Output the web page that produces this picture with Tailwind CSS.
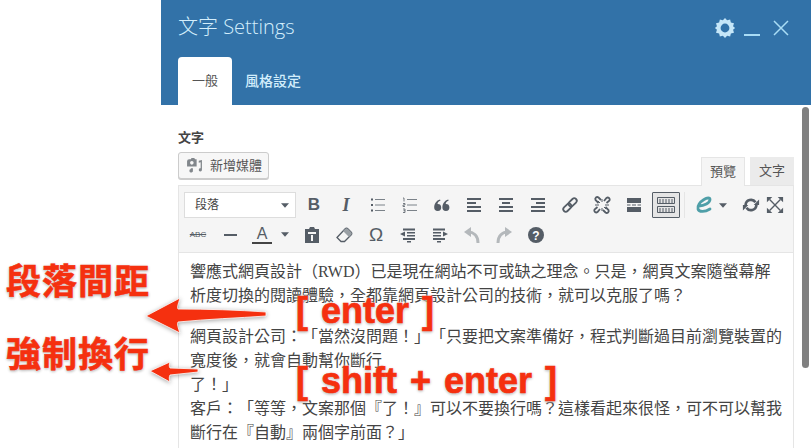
<!DOCTYPE html>
<html lang="zh-Hant">
<head>
<meta charset="UTF-8">
<title>文字 Settings</title>
<script src="https://cdn.jsdelivr.net/npm/@tailwindcss/browser@4"></script>
</head>
<body class="relative h-[448px] w-[811px] overflow-hidden bg-white font-['Noto_Sans','Noto_Sans_CJK_TC',sans-serif]">
<div class="ml-[161px] h-full w-[650px] overflow-hidden">
  <!-- header -->
  <header class="h-[105px] bg-[#3272a8] pl-[17px]">
    <div class="flex h-[57px] items-center justify-between pr-[22px]">
      <h1 class="mb-[3px] font-['Open_Sans','Noto_Sans_CJK_TC',sans-serif] text-[20px] font-light text-[#d3eefc]">文字 Settings</h1>
      <div class="mb-[1px] flex items-center">
        <svg class="h-[22px] w-[22px]" viewBox="0 0 24 24"><path fill="#c5e6f8" fill-rule="evenodd" d="M12 1l2.300 2.600 3.300-1 .8 3.400 3.400.8-1 3.300L23 12l-2.200 1.900 1 3.300-3.400.8-.8 3.400-3.300-1L12 23l-2.300-2.600-3.300 1-.8-3.400-3.400-.8 1-3.300L1 12l2.200-1.900-1-3.300L5.600 6l.8-3.400 3.300 1zM12 7.200a4.800 4.800 0 1 0 0 9.600 4.800 4.800 0 0 0 0-9.600z"/></svg>
        <span class="ml-[8px] mt-[14px] h-[2px] w-[16px] bg-[#a9dcf5]"></span>
        <svg class="ml-[13px] h-[16px] w-[16px]" viewBox="0 0 16 16"><path stroke="#a9dcf5" stroke-width="1.500" d="M1 1l14 14M15 1L1 15"/></svg>
      </div>
    </div>
    <nav class="flex h-[48px] items-end">
      <div class="flex h-[48px] w-[54px] items-center justify-center rounded-t-[4px] bg-white text-[13px] text-[#555]">一般</div>
      <div class="flex h-[48px] items-center pb-[2px] pl-[13px] text-[14px] font-medium text-[#d3eefc]">風格設定</div>
    </nav>
  </header>

  <main class="px-[17px]">
    <label class="block pt-[24px] text-[13px] font-bold leading-[17px] text-[#444]">文字</label>
    <div class="mt-[6px] flex h-[33px] items-start justify-between">
      <button class="flex h-[27px] w-[91px] items-center rounded-[3px] border border-[#ccc] bg-[#f7f7f7] pl-[7px] text-[13px] text-[#555] shadow-[0_1px_0_#ccc]">
        <svg class="mr-[7px] h-[17px] w-[17px]" viewBox="0 0 16 16"><path fill="#82878c" fill-rule="evenodd" d="M3 2h1.500l.7-1h2.600l.7 1H10v7H1V4a2 2 0 0 1 2-2zm2.500 1.800a1.700 1.700 0 1 0 0 3.400 1.700 1.700 0 0 0 0-3.400zM12 3.500l3-.7v9.200a1.500 1.500 0 1 1-1.200-1.400V5l-1.800.4zM4.500 10.500h2v2a1.700 1.700 0 1 1-2-1.200z"/></svg>
        新增媒體
      </button>
      <div class="mt-[5px] flex items-start text-[13px] text-[#555]">
        <span class="z-10 flex h-[29px] w-[44px] items-center justify-center border border-b-0 border-[#e5e5e5] bg-[#f5f5f5]">預覽</span>
        <span class="ml-[5px] flex h-[28px] w-[44px] items-center justify-center bg-[#ebebeb]">文字</span>
      </div>
    </div>

    <!-- editor -->
    <section class="h-[300px] border border-[#e5e5e5]">
      <div class="h-[67px] border-b border-[#e5e5e5] bg-[#f5f5f5] pl-[3px] pt-[4px] text-[#555d66]">
        <div class="flex h-[30px] items-center">
          <div class="ml-[2px] flex h-[26px] w-[112px] items-center justify-between border border-[#ddd] bg-white pl-[10px] pr-[6px] text-[12px] text-[#444]">段落
            <svg class="h-[5px] w-[8px]" viewBox="0 0 9 5"><path fill="#555d66" d="M0 0h9L4.500 5z"/></svg>
          </div>
          <span class="ml-[2px] flex w-[32px] justify-center font-['Liberation_Sans'] text-[17px] font-bold">B</span>
          <span class="flex w-[32px] justify-center font-['Liberation_Serif'] text-[18px] font-bold italic">I</span>
          <span class="flex w-[32px] justify-center">
            <svg class="h-[20px] w-[20px]" viewBox="0 0 20 20"><path stroke="#7b8289" d="M7 4.500h10M7 10h10M7 15.500h10"/><path fill="#555d66" d="M3 3.500h2v2H3zM3 9h2v2H3zM3 14.500h2v2H3z"/></svg>
          </span>
          <span class="flex w-[32px] justify-center">
            <svg class="h-[20px] w-[20px]" viewBox="0 0 20 20"><path stroke="#7b8289" d="M7 4.500h10M7 10h10M7 15.500h10"/><path fill="none" stroke="#555d66" stroke-width=".8" d="M3 3h1v3.500M3 8.500h2v1.500H3v1.500h2M3 14h2v3.500H3M3.500 15.700H5"/></svg>
          </span>
          <span class="flex w-[32px] justify-center">
            <svg class="h-[20px] w-[20px]" viewBox="0 0 20 20"><path fill="#555d66" d="M5.500 9a3.500 3.500 0 1 1-3.300 3.500C2.200 8.500 4.500 5.500 8 4.500l.5 1C6.500 6.500 5.500 7.500 5.500 9zM13.700 9a3.500 3.500 0 1 1-3.300 3.500c0-4 2.300-7 5.800-8l.5 1c-2 1-3 2-3 3.500z"/></svg>
          </span>
          <span class="flex w-[32px] justify-center">
            <svg class="h-[20px] w-[20px]" viewBox="0 0 20 20"><path fill="#555d66" d="M3 3h14v2H3zM3 7h9v2H3zM3 11h14v2H3zM3 15h14v2H3z"/></svg>
          </span>
          <span class="flex w-[32px] justify-center">
            <svg class="h-[20px] w-[20px]" viewBox="0 0 20 20"><path fill="#555d66" d="M3 3h14v2H3zM6 7h8v2H6zM3 11h14v2H3zM3 15h14v2H3z"/></svg>
          </span>
          <span class="flex w-[32px] justify-center">
            <svg class="h-[20px] w-[20px]" viewBox="0 0 20 20"><path fill="#555d66" d="M3 3h14v2H3zM8 7h9v2H8zM3 11h14v2H3zM3 15h14v2H3z"/></svg>
          </span>
          <span class="flex w-[32px] justify-center">
            <svg class="h-[20px] w-[20px]" viewBox="0 0 20 20"><g fill="none" stroke="#555d66" stroke-width="1.800" transform="rotate(-45 10 10)"><rect x="1.500" y="7.500" width="9.500" height="5" rx="2.500"/><rect x="9" y="7.500" width="9.500" height="5" rx="2.500"/></g></svg>
          </span>
          <span class="flex w-[32px] justify-center">
            <svg class="h-[20px] w-[20px]" viewBox="0 0 20 20"><path fill="none" stroke="#555d66" stroke-width="1.800" d="M6.500 8L3.500 5a2 2 0 0 1 3-2.500L9 5M13.500 12l3 3a2 2 0 0 1-3 2.500L11 15M12 6l2.500-3a2 2 0 0 1 3 2.500L14.500 8M8 14l-2.500 3a2 2 0 0 1-3-2.500L5.500 12"/><path stroke="#555d66" d="M10 7v-3M10 13v3M7 10H3M13 10h4M8 8L6 6M12 12l2 2"/></svg>
          </span>
          <span class="flex w-[32px] justify-center">
            <svg class="h-[20px] w-[20px]" viewBox="0 0 20 20"><path fill="#555d66" d="M3 3h14v5H3zM3 12h14v5H3zM3 9.500h3.500v1H3zM8 9.500h4v1H8zM13.500 9.500H17v1h-3.500z"/></svg>
          </span>
          <span class="flex w-[32px] justify-center">
            <span class="flex h-[26px] w-[28px] items-center justify-center rounded-[1px] border border-[#555d66] bg-[#e5e5e5]">
              <svg class="h-[20px] w-[22px]" viewBox="0 0 22 20"><path fill="none" stroke="#555d66" d="M2.500 2.500h17v6h-17zM2.500 11.500h17v6h-17z"/><path stroke="#555d66" stroke-dasharray="2 1" d="M4 5h14M4 7h14M4 14h14M4 16h14"/></svg>
            </span>
          </span>
          <span class="ml-[2px] h-[26px] w-px bg-[#e5e5e5]"></span>
          <svg class="ml-[9px] h-[18px] w-[20px]" viewBox="0 0 20 18"><path fill="none" stroke="#4f9fa8" stroke-width="2.800" stroke-linecap="round" d="M5 10C10 10 16 7 16 3.500 16 1.500 13 1.500 10 3.500 6 6 3 10 4 13 5 16.500 11 16 16 13"/></svg>
          <svg class="ml-[5px] h-[5px] w-[8px]" viewBox="0 0 9 5"><path fill="#555d66" d="M0 0h9L4.500 5z"/></svg>
          <svg class="ml-[15px] h-[18px] w-[18px]" viewBox="0 0 20 20"><path fill="none" stroke="#555d66" stroke-width="3" d="M4 10a6 6 0 0 1 11-3M16 10a6 6 0 0 1-11 3"/><path fill="#555d66" d="M19 4v6h-6zM1 16v-6h6z"/></svg>
          <svg class="ml-[6px] h-[18px] w-[18px]" viewBox="0 0 20 20"><path stroke="#555d66" stroke-width="1.500" d="M4 4l12 12M16 4L4 16"/><path fill="#555d66" d="M1 1h6L1 7zM19 1v6l-6-6zM1 19v-6l6 6zM19 19h-6l6-6z"/></svg>
        </div>
        <div class="flex h-[29px] items-center">
          <span class="flex w-[32px] justify-center font-['Liberation_Sans'] text-[8px] line-through">ABC</span>
          <span class="flex w-[32px] justify-center"><span class="h-[2px] w-[13px] bg-[#555d66]"></span></span>
          <span class="flex w-[32px] flex-col items-center font-['Liberation_Sans'] text-[16px] leading-[16px]">A<span class="h-[2px] w-[20px] bg-[#444]"></span></span>
          <svg class="ml-[3px] h-[5px] w-[8px]" viewBox="0 0 9 5"><path fill="#555d66" d="M0 0h9L4.500 5z"/></svg>
          <span class="ml-[7px] flex w-[32px] justify-center">
            <svg class="h-[20px] w-[20px]" viewBox="0 0 20 20"><path fill="#555d66" fill-rule="evenodd" d="M3 4h4l1-2h4l1 2h4v14H3zM6 7v2h8V7zm3 3v6h2v-6z"/></svg>
          </span>
          <span class="flex w-[32px] justify-center">
            <svg class="h-[20px] w-[20px]" viewBox="0 0 20 20"><path fill="none" stroke="#555d66" stroke-width="1.300" d="M3 12.500l8-8.500c1-1 2-1 3 0l3 3c1 1 1 2 0 3l-6.500 6.500H7z"/><path fill="#9aa0a5" d="M11 4c1-1 2-1 3 0l3 3c1 1 1 2 0 3l-2 2-6-6z"/></svg>
          </span>
          <span class="flex w-[32px] justify-center font-['Liberation_Sans'] text-[19px] leading-none">Ω</span>
          <span class="flex w-[32px] justify-center">
            <svg class="h-[20px] w-[20px]" viewBox="0 0 20 20"><path fill="#555d66" d="M5 3.500h12v2H5zM9 7h8v1.500H9zM9 10h8v1.500H9zM5 13h12v2H5zM9 16h4v1.500H9zM7 6.500v5l-5-2.500z"/></svg>
          </span>
          <span class="flex w-[32px] justify-center">
            <svg class="h-[20px] w-[20px]" viewBox="0 0 20 20"><path fill="#555d66" d="M3 3.500h12v2H3zM3 7h8v1.500H3zM3 10h8v1.500H3zM3 13h12v2H3zM7 16h4v1.500H7zM13 6.500v5l5-2.500z"/></svg>
          </span>
          <span class="flex w-[32px] justify-center">
            <svg class="h-[20px] w-[20px]" viewBox="0 0 20 20"><path fill="none" stroke="#b4b8bb" stroke-width="3" d="M6 7c5 0 10 3 10 11"/><path fill="#b4b8bb" d="M9 2v10L2 7z"/></svg>
          </span>
          <span class="flex w-[32px] justify-center">
            <svg class="h-[20px] w-[20px]" viewBox="0 0 20 20"><path fill="none" stroke="#b4b8bb" stroke-width="3" d="M14 7C9 7 4 10 4 18"/><path fill="#b4b8bb" d="M11 2v10l7-5z"/></svg>
          </span>
          <span class="flex w-[32px] justify-center">
            <svg class="h-[20px] w-[20px]" viewBox="0 0 20 20"><circle cx="10" cy="10" r="8" fill="#555d66"/><text x="10" y="14.500" text-anchor="middle" fill="#fff" font-size="12" font-weight="700" font-family="Liberation Sans">?</text></svg>
          </span>
        </div>
      </div>
      <div class="pl-[11px] pr-[10px] pt-[7px] font-['Liberation_Serif','Noto_Sans_CJK_TC',serif] text-[16px] leading-[24px] text-[#444] [text-spacing-trim:space-all]">
        <p>響應式網頁設計（RWD）已是現在網站不可或缺之理念。只是，網頁文案隨螢幕解析度切換的閱讀體驗，全都靠網頁設計公司的技術，就可以克服了嗎？</p>
        <p class="mt-[17px]">網頁設計公司：「當然沒問題！」「只要把文案準備好，程式判斷過目前瀏覽裝置的寬度後，就會自動幫你斷行<br>了！」<br>客戶：「等等，文案那個『了！』可以不要換行嗎？這樣看起來很怪，可不可以幫我斷行在『自動』兩個字前面？」</p>
      </div>
    </section>
  </main>
</div>

<!-- scrollbar -->
<div class="absolute left-[802px] top-[107px] h-[261px] w-[7px] rounded-full bg-[#808080]"></div>

<!-- annotations -->
<svg class="absolute left-[140px] top-[290px] h-[50px] w-[130px] drop-shadow-[0_1px_2px_rgba(0,0,0,0.35)]" viewBox="0 0 130 50"><path fill="#f5300f" stroke="#fff" stroke-width=".8" d="M6 26L40 8c-2 7-3 9-2 11 30 0 60 1 88 3v4c-28 2-58 3-88 6-1 2 0 6 2 11z"/></svg>
<svg class="absolute left-[145px] top-[355px] h-[30px] w-[60px] drop-shadow-[0_1px_2px_rgba(0,0,0,0.35)]" viewBox="0 0 60 30"><path fill="#f5300f" stroke="#fff" stroke-width=".8" d="M5 16L25 7c-1 3-1 4 0 6l28 1v3l-28 3c-1 2-1 4 0 7z"/></svg>
<div class="absolute left-[6px] top-[261px] text-[35px] font-bold leading-[40px] tracking-[1px] text-[#f5300f] [-webkit-text-stroke:0.6px_#f5300f] [text-shadow:0_0_3px_#fff,0_1px_3px_#888]">段落間距</div>
<div class="absolute left-[6px] top-[334px] text-[35px] font-bold leading-[40px] tracking-[1px] text-[#f5300f] [-webkit-text-stroke:0.6px_#f5300f] [text-shadow:0_0_3px_#fff,0_1px_3px_#888]">強制換行</div>
<div class="absolute left-[296px] top-[291px] font-['Liberation_Sans'] text-[36px] font-bold leading-[40px] text-[#f5300f] [-webkit-text-stroke:0.7px_#f5300f] [word-spacing:3px] [text-shadow:0_0_3px_#fff,0_1px_3px_#888]">[ enter ]</div>
<div class="absolute left-[296px] top-[361px] font-['Liberation_Sans'] text-[36px] font-bold leading-[40px] text-[#f5300f] [-webkit-text-stroke:0.7px_#f5300f] [word-spacing:3px] [text-shadow:0_0_3px_#fff,0_1px_3px_#888]">[ shift + enter ]</div>
</body>
</html>
